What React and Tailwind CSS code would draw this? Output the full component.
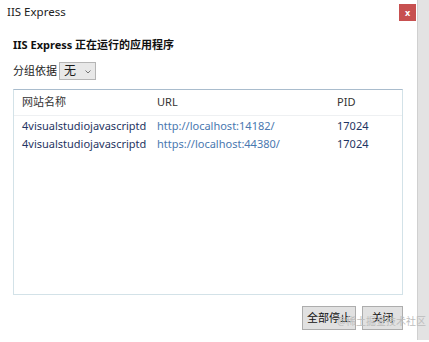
import React from 'react';

const font = { fontFamily: '"Noto Sans", "Noto Sans CJK SC", sans-serif' };

const rows = [
    { name: '4visualstudiojavascriptd', url: 'http://localhost:14182/', pid: '17024' },
    { name: '4visualstudiojavascriptd', url: 'https://localhost:44380/', pid: '17024' },
];

export default function App() {
    return (
        <div className="w-[429px] h-[342px] bg-white flex overflow-hidden text-[11px] text-[#1a1a1a] relative" style={font}>
            <div className="w-[417px] h-[340px] flex flex-col">
                {/* Title bar */}
                <div className="flex items-start justify-between h-[28px]">
                    <span className="pl-[7px] pt-[3px] text-[11.5px] text-[#222]">IIS Express</span>
                    <button className="mt-[4px] mr-[1px] w-[17px] h-[17px] bg-[#c75050] flex items-center justify-center text-white text-[9px] font-bold leading-none">x</button>
                </div>

                <div className="px-[13px] flex flex-col">
                    <div className="pt-[8px] font-bold text-[11px] text-[#111] leading-[18px]">IIS Express 正在运行的应用程序</div>

                    <div className="flex items-center mt-[8px] h-[18px]">
                        <span className="text-[11px] mr-[2px]">分组依据</span>
                        <div className="w-[37px] h-[18px] bg-[#e8e8e8] border border-[#b5b5b5] flex items-center pl-[4px] gap-[9px]">
                            <span className="text-[12px] leading-none">无</span>
                            <svg width="6" height="4" viewBox="0 0 6 4" className="mt-[1px]">
                                <path d="M0.5 0.5 L3 3 L5.5 0.5" stroke="#666" strokeWidth="0.9" fill="none" />
                            </svg>
                        </div>
                    </div>

                    {/* List */}
                    <div className="mt-[9px] w-[390px] h-[206px] border border-[#d3e2e8] border-t-[#a9bccd] flex flex-col">
                        <div className="flex items-center h-[26px] border-b border-[#eef0f2] text-[11px] text-[#333]">
                            <span className="w-[143px] pl-[8px]">网站名称</span>
                            <span className="w-[180px]">URL</span>
                            <span>PID</span>
                        </div>
                        {rows.map((r, i) => (
                            <div key={i} className={`flex items-center h-[18px] text-[11px] ${i === 0 ? 'mt-[1px]' : ''}`}>
                                <span className="w-[143px] pl-[8px] text-[#1f3563]">{r.name}</span>
                                <span className="w-[180px] text-[#4a78b0]">{r.url}</span>
                                <span className="text-[#1f3563]">{r.pid}</span>
                            </div>
                        ))}
                    </div>

                    <div className="flex justify-end gap-[6px] mt-[11px] pr-[1px]">
                        <button className="w-[54px] h-[24px] bg-[#e1e1e1] border border-[#adadad] text-[11px] text-[#111]">全部停止</button>
                        <button className="w-[41px] h-[24px] bg-[#e1e1e1] border border-[#adadad] text-[11px] text-[#111]">关闭</button>
                    </div>
                </div>
            </div>
            <div className="w-[12px] h-[340px] bg-[#e3e3e3] border-l border-[#d0d0d0]" />
            <span className="absolute left-[337px] top-[316px] text-[10px] text-[#bdbdbd] whitespace-nowrap leading-none">@稀土掘金技术社区</span>
        </div>
    );
}
